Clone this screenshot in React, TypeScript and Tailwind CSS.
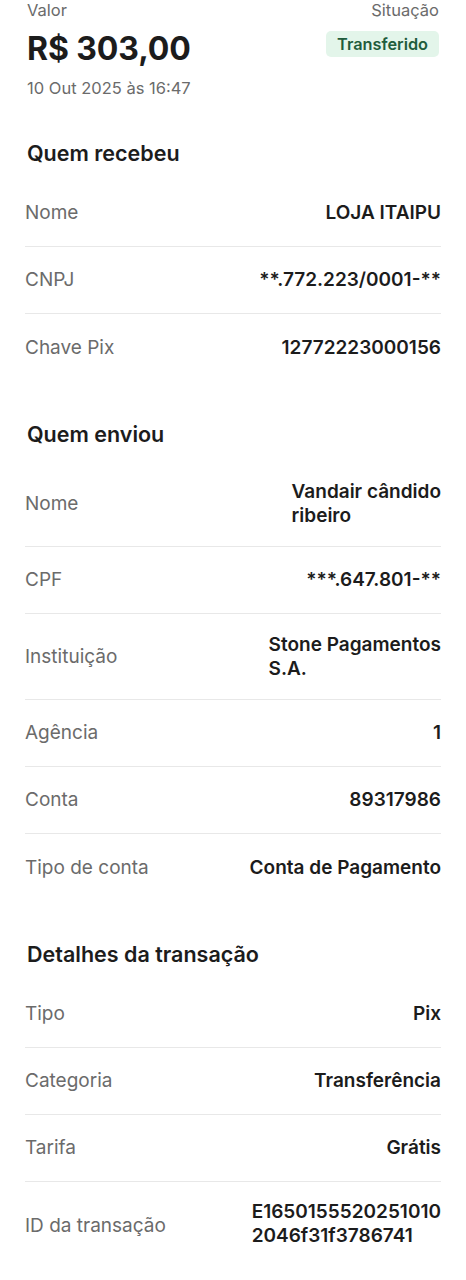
import { Fragment } from "react";

type Row = { label: string; value: string[]; tall?: boolean };

const sections: { title: string; rows: Row[]; lastDivider?: boolean }[] = [
  {
    title: "Quem recebeu",
    rows: [
      { label: "Nome", value: ["LOJA ITAIPU"] },
      { label: "CNPJ", value: ["**.772.223/0001-**"] },
      { label: "Chave Pix", value: ["12772223000156"] },
    ],
  },
  {
    title: "Quem enviou",
    rows: [
      { label: "Nome", value: ["Vandair cândido", "ribeiro"] },
      { label: "CPF", value: ["***.647.801-**"] },
      { label: "Instituição", value: ["Stone Pagamentos", "S.A."] },
      { label: "Agência", value: ["1"] },
      { label: "Conta", value: ["89317986"] },
      { label: "Tipo de conta", value: ["Conta de Pagamento"] },
    ],
  },
  {
    title: "Detalhes da transação",
    lastDivider: true,
    rows: [
      { label: "Tipo", value: ["Pix"] },
      { label: "Categoria", value: ["Transferência"] },
      { label: "Tarifa", value: ["Grátis"] },
      { label: "ID da transação", value: ["E1650155520251010", "2046f31f3786741"], tall: true },
    ],
  },
];

function DetailRow({ row, divider }: { row: Row; divider: boolean }) {
  return (
    <div
      className={`flex min-h-[67px] items-center justify-between gap-4 ${
        row.tall ? "pt-[18px] pb-[32px]" : "py-[18.5px]"
      } ${divider ? "border-b border-[#e8e8e8]" : ""}`}
    >
      <span className={`text-[19px] leading-6 text-[#6b6b6b] ${row.tall ? "mt-[4px]" : ""}`}>
        {row.label}
      </span>
      <span className="w-fit text-left text-[19px] font-semibold leading-6 text-[#1c1c1c]">
        {row.value.map((line, i) => (
          <Fragment key={i}>
            {i > 0 && <br />}
            {line}
          </Fragment>
        ))}
      </span>
    </div>
  );
}

export default function App() {
  return (
    <div className="min-h-screen bg-white px-[25px] font-['Inter',sans-serif] text-[#1c1c1c]">
      <div className="flex items-start justify-between">
        <div className="pl-[2px]">
          <p className="text-[16.5px] leading-5 text-[#6b6b6b]">Valor</p>
          <p className="mt-[9px] text-[32px] font-bold leading-10 tracking-[-0.1px]">R$ 303,00</p>
          <p className="mt-[9px] text-[16.5px] leading-5 text-[#6b6b6b]">10 Out 2025 às 16:47</p>
        </div>
        <div className="flex flex-col items-end pr-[2px]">
          <p className="text-[16.5px] leading-5 text-[#6b6b6b]">Situação</p>
          <span className="mt-[11px] rounded-[5px] bg-[#e3f5ea] px-[11px] py-[3px] text-[16.3px] font-semibold leading-5 text-[#1f5c3c]">
            Transferido
          </span>
        </div>
      </div>

      {sections.map((section, si) => (
        <section key={section.title} className={si === 0 ? "mt-[41px]" : "mt-[39px]"}>
          <h2 className="pl-[2px] text-[21.5px] font-semibold leading-7 text-[#1c1c1c]">
            {section.title}
          </h2>
          <div className="mt-[13px]">
            {section.rows.map((row, ri) => (
              <DetailRow
                key={row.label}
                row={row}
                divider={ri < section.rows.length - 1 || !!section.lastDivider}
              />
            ))}
          </div>
        </section>
      ))}
    </div>
  );
}
